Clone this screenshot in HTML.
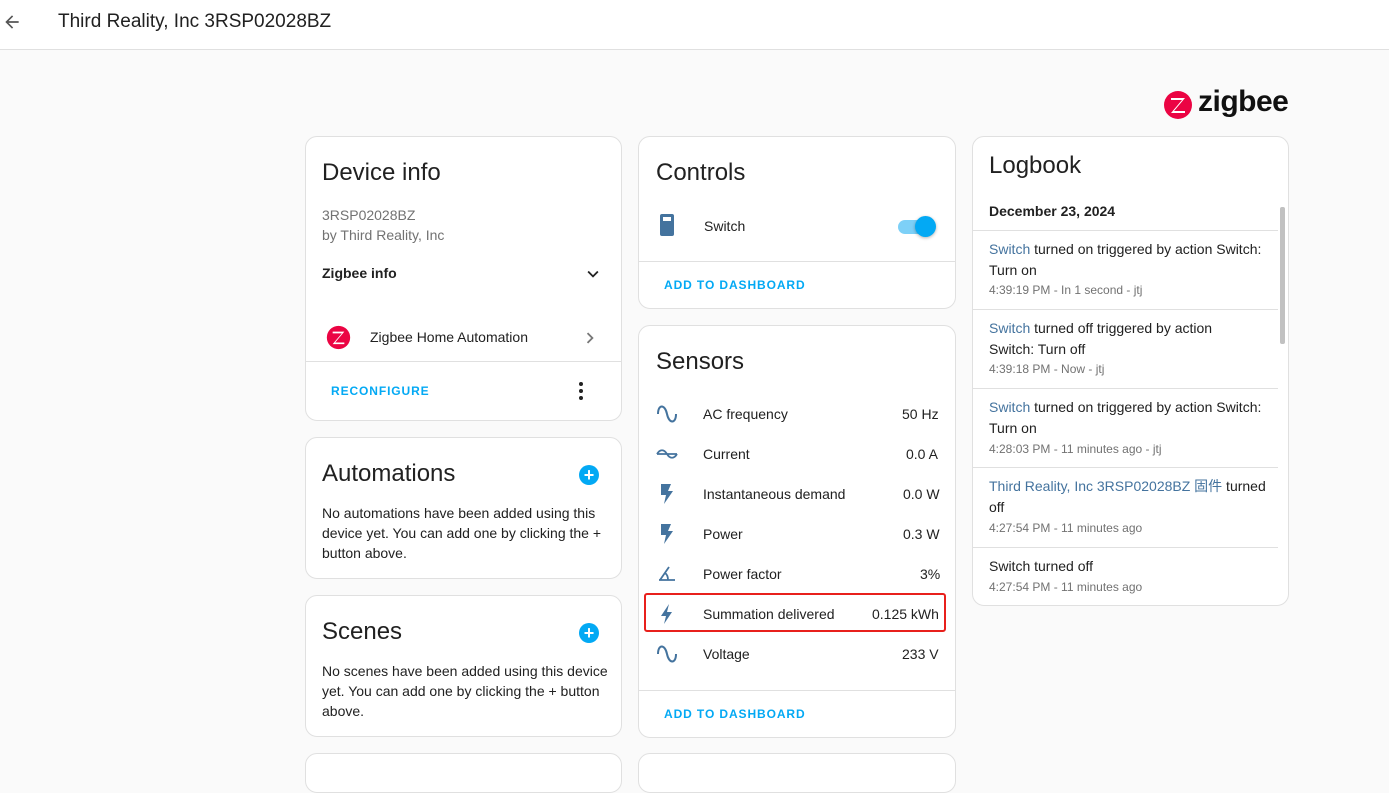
<!DOCTYPE html>
<html><head><meta charset="utf-8"><style>
*{box-sizing:border-box;margin:0;padding:0}
body{width:1389px;height:763px;overflow:hidden;background:#fafafa;font-family:"Liberation Sans","Noto Sans CJK SC",sans-serif;color:#212121;position:relative}
.hdr{position:absolute;left:0;top:0;width:1389px;height:50px;background:#fff;border-bottom:1px solid #e0e0e0}
.hdr .t{position:absolute;left:58px;top:11px;font-size:19px}
.card{position:absolute;background:#fff;border:1px solid #e0e0e0;border-radius:12px;overflow:hidden}
.h{position:absolute;font-size:24px;color:#212121}
.a{position:absolute;font-size:14px}
.btn{position:absolute;font-size:12px;color:#03a9f4;letter-spacing:0.9px;font-weight:bold}
.line{position:absolute;left:0;right:0;height:1px;background:#e0e0e0}
.g{color:#727272}
.lk{color:#44739e}
.plus{position:absolute;width:20px;height:20px;border-radius:50%;background:#03a9f4;color:#fff;font-size:18px;line-height:20px;text-align:center;font-weight:bold}
</style></head><body>
<div class="hdr"><svg style="position:absolute;left:2px;top:12px" width="20" height="20" viewBox="0 0 24 24"><path d="M20 11H7.8l5.6-5.6L12 4l-8 8 8 8 1.4-1.4L7.8 13H20z" fill="#555"/></svg><div class="t">Third Reality, Inc 3RSP02028BZ</div></div>

<svg style="position:absolute;left:1163px;top:90px" width="30" height="30" viewBox="0 0 30 30"><circle cx="15" cy="15" r="14" fill="#eb0443"/><path d="M8 8h14l-11 13h11v2H8l11-13H8z" fill="#fff"/></svg>
<div style="position:absolute;left:1198px;top:85px;font-size:30px;font-weight:bold;color:#111;letter-spacing:-0.5px">zigbee</div>

<div class="card" style="left:305px;top:136px;width:317px;height:285px">
<div class="h" style="left:16px;top:22px">Device info</div>
<div class="a g" style="left:16px;top:70px">3RSP02028BZ</div>
<div class="a g" style="left:16px;top:90px">by Third Reality, Inc</div>
<div class="a" style="left:16px;top:128px;font-weight:bold">Zigbee info</div>
<svg style="position:absolute;left:276px;top:126px" width="22" height="22" viewBox="0 0 24 24"><path d="M7.4 8.6L12 13.2l4.6-4.6L18 10l-6 6-6-6z" fill="#222"/></svg>
<svg style="position:absolute;left:20px;top:188px" width="25" height="25" viewBox="0 0 30 30"><circle cx="15" cy="15" r="14" fill="#eb0443"/><path d="M8 8h14l-11 13h11v2H8l11-13H8z" fill="#fff"/></svg>
<div class="a" style="left:64px;top:192px">Zigbee Home Automation</div>
<svg style="position:absolute;left:273px;top:190px" width="22" height="22" viewBox="0 0 24 24"><path d="M8.6 16.6L13.2 12 8.6 7.4 10 6l6 6-6 6z" fill="#777"/></svg>
<div class="line" style="top:224px"></div>
<div class="btn" style="left:25px;top:247px">RECONFIGURE</div>
<svg style="position:absolute;left:266px;top:244px" width="18" height="20" viewBox="0 0 18 20"><circle cx="9" cy="3" r="2" fill="#222"/><circle cx="9" cy="10" r="2" fill="#222"/><circle cx="9" cy="17" r="2" fill="#222"/></svg>
</div>

<div class="card" style="left:305px;top:437px;width:317px;height:142px">
<div class="h" style="left:16px;top:22px">Automations</div>
<div class="plus" style="left:273px;top:27px">+</div>
<div class="a" style="left:16px;top:65px;width:290px;line-height:20px">No automations have been added using this device yet. You can add one by clicking the + button above.</div>
</div>
<div class="card" style="left:305px;top:595px;width:317px;height:142px">
<div class="h" style="left:16px;top:22px">Scenes</div>
<div class="plus" style="left:273px;top:27px">+</div>
<div class="a" style="left:16px;top:65px;width:290px;line-height:20px">No scenes have been added using this device yet. You can add one by clicking the + button above.</div>
</div>
<div class="card" style="left:305px;top:753px;width:317px;height:40px"></div>

<div class="card" style="left:638px;top:136px;width:318px;height:173px">
<div class="h" style="left:17px;top:22px">Controls</div>
<svg style="position:absolute;left:20px;top:76px" width="16" height="24" viewBox="0 0 16 24"><rect x="1" y="1" width="14" height="22" rx="2" fill="#44739e"/><rect x="4" y="4" width="8" height="4" fill="#fff"/></svg>
<div class="a" style="left:65px;top:81px">Switch</div>
<div style="position:absolute;left:259px;top:83px;width:34px;height:14px;border-radius:7px;background:#7dd0f7"></div>
<div style="position:absolute;left:276px;top:79px;width:21px;height:21px;border-radius:50%;background:#03a9f4;box-shadow:0 1px 3px rgba(0,0,0,.3)"></div>
<div class="line" style="top:124px"></div>
<div class="btn" style="left:25px;top:141px">ADD TO DASHBOARD</div>
</div>

<div class="card" style="left:638px;top:325px;width:318px;height:413px">
<div class="h" style="left:17px;top:22px">Sensors</div>
<div class="line" style="top:364px"></div>
<div class="btn" style="left:25px;top:381px">ADD TO DASHBOARD</div>
</div>
<div style="position:absolute;left:644px;top:593px;width:302px;height:39px;border:2px solid #e8201c;border-radius:3px"></div>
<div class="card" style="left:638px;top:753px;width:318px;height:40px"></div>

<div class="card" style="left:972px;top:136px;width:317px;height:470px">
<div class="h" style="left:16px;top:15px">Logbook</div>
<div class="a" style="left:16px;top:66px;font-weight:bold">December 23, 2024</div>
<div class="line" style="top:93px;right:10px"></div>
<div class="a" style="left:16px;top:102px;width:290px;line-height:21px"><span class="lk">Switch</span> turned on triggered by action Switch: Turn on</div>
<div class="a g" style="left:16px;top:146px;font-size:12px">4:39:19 PM - In 1 second - jtj</div>
<div class="line" style="top:172px;right:10px"></div>
<div class="a" style="left:16px;top:181px;width:250px;line-height:21px"><span class="lk">Switch</span> turned off triggered by action Switch: Turn off</div>
<div class="a g" style="left:16px;top:225px;font-size:12px">4:39:18 PM - Now - jtj</div>
<div class="line" style="top:251px;right:10px"></div>
<div class="a" style="left:16px;top:260px;width:290px;line-height:21px"><span class="lk">Switch</span> turned on triggered by action Switch: Turn on</div>
<div class="a g" style="left:16px;top:305px;font-size:12px">4:28:03 PM - 11 minutes ago - jtj</div>
<div class="line" style="top:330px;right:10px"></div>
<div class="a" style="left:16px;top:339px;width:290px;line-height:21px"><span class="lk">Third Reality, Inc 3RSP02028BZ 固件</span> turned off</div>
<div class="a g" style="left:16px;top:384px;font-size:12px">4:27:54 PM - 11 minutes ago</div>
<div class="line" style="top:410px;right:10px"></div>
<div class="a" style="left:16px;top:421px">Switch turned off</div>
<div class="a g" style="left:16px;top:443px;font-size:12px">4:27:54 PM - 11 minutes ago</div>
<div style="position:absolute;left:307px;top:70px;width:5px;height:137px;background:#c1c1c1;border-radius:2px"></div>
</div>

<svg style="position:absolute;left:656px;top:402px" width="22" height="24" viewBox="0 0 22 24"><path d="M2 12C2 2 9 2 11 12S20 22 20 12" fill="none" stroke="#44739e" stroke-width="2"/></svg>
<div class="a" style="left:703px;top:406px">AC frequency</div><div class="a" style="left:902px;top:406px">50 Hz</div>
<svg style="position:absolute;left:656px;top:446px" width="22" height="16" viewBox="0 0 22 16"><path d="M1 8C4 3 8 3 11 8S18 13 21 8M1 8h20" fill="none" stroke="#44739e" stroke-width="1.8"/></svg>
<div class="a" style="left:703px;top:446px">Current</div><div class="a" style="left:906px;top:446px">0.0 A</div>
<svg style="position:absolute;left:660px;top:483px" width="14" height="22" viewBox="0 0 14 22"><path d="M1 1h10l-3 7h5L4 21l2-9H1z" fill="#44739e"/></svg>
<div class="a" style="left:703px;top:486px">Instantaneous demand</div><div class="a" style="left:903px;top:486px">0.0 W</div>
<svg style="position:absolute;left:660px;top:523px" width="14" height="22" viewBox="0 0 14 22"><path d="M1 1h10l-3 7h5L4 21l2-9H1z" fill="#44739e"/></svg>
<div class="a" style="left:703px;top:526px">Power</div><div class="a" style="left:903px;top:526px">0.3 W</div>
<svg style="position:absolute;left:658px;top:564px" width="18" height="18" viewBox="0 0 18 18"><path d="M1 16h16M2 16L11 3M7 9c3 2 3 5 3 7" fill="none" stroke="#44739e" stroke-width="1.8"/></svg>
<div class="a" style="left:703px;top:566px">Power factor</div><div class="a" style="left:920px;top:566px">3%</div>
<svg style="position:absolute;left:660px;top:603px" width="14" height="22" viewBox="0 0 14 22"><path d="M9 1L1 13h5l-2 8 8-12H7z" fill="#44739e"/></svg>
<div class="a" style="left:703px;top:606px">Summation delivered</div><div class="a" style="left:872px;top:606px">0.125 kWh</div>
<svg style="position:absolute;left:656px;top:642px" width="22" height="24" viewBox="0 0 22 24"><path d="M2 12C2 2 9 2 11 12S20 22 20 12" fill="none" stroke="#44739e" stroke-width="2"/></svg>
<div class="a" style="left:703px;top:646px">Voltage</div><div class="a" style="left:902px;top:646px">233 V</div>
</body></html>
